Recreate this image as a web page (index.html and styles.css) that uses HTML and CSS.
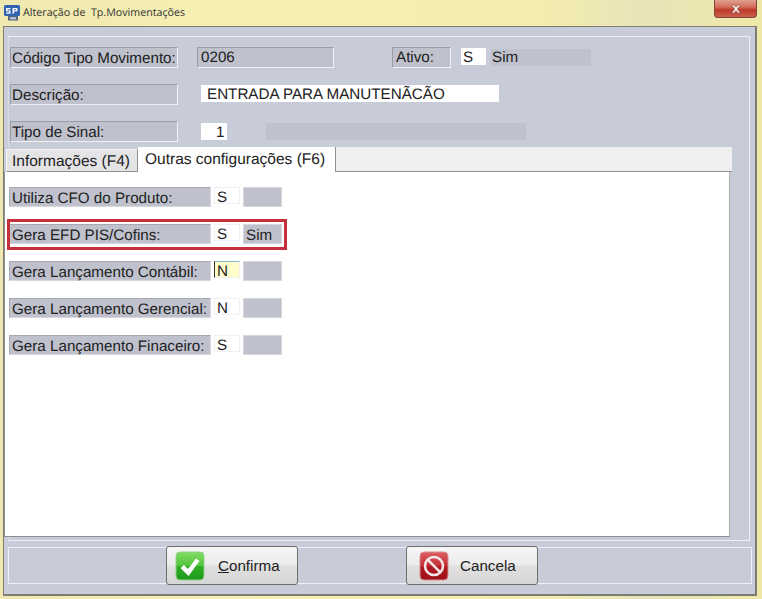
FILE: index.html
```html
<!DOCTYPE html>
<html lang="pt">
<head>
<meta charset="utf-8">
<title>Alteração de Tp.Movimentações</title>
<link rel="stylesheet" href="styles.css">
</head>
<body>
<div class="window">
  <header class="titlebar">
    <svg class="logo" viewBox="0 0 16 16" width="16" height="16"><rect x="0" y="0" width="16" height="11" rx="1.500" fill="#2f62b0"/><path d="M2 3h4.500v1.400H3.500v1h3v3.400H2V7.400h3v-1H2zM8.500 3h5v3.600h-3.400v2.200H8.500zM10.100 4.300v1h1.800v-1z" fill="#f2f4fa"/><rect x="4" y="11" width="10" height="4.500" fill="#55657f"/><rect x="6" y="12.300" width="6" height="2" fill="#c4cedd"/></svg>
    <span class="title">Alteração de&nbsp; Tp.Movimentações</span>
    <div class="close"><svg viewBox="0 0 12 10" width="12" height="10"><path d="M1.500 1h2.600L6 3.200 7.900 1h2.600L7.400 5l3.100 4H7.900L6 6.800 4.100 9H1.500l3.100-4z" fill="#f6efee" stroke="#7c3a30" stroke-width=".5"/></svg></div>
  </header>
  <main class="client">
    <div class="frame">
      <div class="head">
        <div class="line line-1">
          <div class="sunken lbl">Código Tipo Movimento:</div>
          <div class="sunken code">0206</div>
          <div class="sunken ativo">Ativo:</div>
          <div class="input s-in">S</div>
          <div class="flatbox sim">Sim</div>
        </div>
        <div class="line line-2">
          <div class="sunken lbl">Descrição:</div>
          <div class="input desc">ENTRADA PARA MANUTENÃCÃO</div>
        </div>
        <div class="line line-3">
          <div class="sunken lbl">Tipo de Sinal:</div>
          <div class="input sinal">1</div>
          <div class="flatbox sinal-desc"></div>
        </div>
      </div>
      <div class="tabs">
        <div class="tabbar">
          <div class="tab off">Informações (F4)</div>
          <div class="tab on">Outras configurações (F6)</div>
        </div>
        <div class="page">
          <div class="opt"><div class="sunken olbl">Utiliza CFO do Produto:</div><div class="input oin">S</div><div class="sunken oval"></div></div>
          <div class="opt marked"><div class="sunken olbl">Gera EFD PIS/Cofins:</div><div class="input oin">S</div><div class="sunken oval">Sim</div></div>
          <div class="opt"><div class="sunken olbl">Gera Lançamento Contábil:</div><div class="input oin focus">N</div><div class="sunken oval"></div></div>
          <div class="opt"><div class="sunken olbl">Gera Lançamento Gerencial:</div><div class="input oin">N</div><div class="sunken oval"></div></div>
          <div class="opt"><div class="sunken olbl">Gera Lançamento Finaceiro:</div><div class="input oin">S</div><div class="sunken oval"></div></div>
        </div>
      </div>
    </div>
    <footer class="actions">
      <button class="btn btn-ok" type="button">
        <svg class="ico" viewBox="0 0 30 30" width="30" height="30"><defs><linearGradient id="g" x1="0" y1="0" x2="0" y2="1"><stop offset="0" stop-color="#7fdc62"/><stop offset=".48" stop-color="#55c63e"/><stop offset=".52" stop-color="#2fae26"/><stop offset="1" stop-color="#1f9a1c"/></linearGradient></defs><rect x="1" y="1" width="28" height="28" rx="4" fill="url(#g)" stroke="#8fd088"/><path d="M5.500 17l3.500-3 4 4L21 7.500l3.500 2.500L13.500 25z" fill="#fff"/></svg>
        <span class="cap"><u>C</u>onfirma</span>
      </button>
      <button class="btn btn-no" type="button">
        <svg class="ico" viewBox="0 0 30 30" width="30" height="30"><defs><linearGradient id="r" x1="0" y1="0" x2="0" y2="1"><stop offset="0" stop-color="#dc6064"/><stop offset=".48" stop-color="#c43038"/><stop offset=".52" stop-color="#b01a22"/><stop offset="1" stop-color="#9c1018"/></linearGradient></defs><rect x="1" y="1" width="28" height="28" rx="4" fill="url(#r)" stroke="#dd8f8f"/><circle cx="15" cy="15" r="9" fill="none" stroke="#f4e6e6" stroke-width="2.600"/><path d="M8.700 8.700L21.300 21.300" stroke="#f4e6e6" stroke-width="2.600"/></svg>
        <span class="cap">Cancela</span>
      </button>
    </footer>
  </main>
</div>
</body>
</html>
```
FILE: styles.css
```css
*, *::before, *::after { box-sizing: border-box; }
html, body { margin: 0; padding: 0; }
body {
  width: 762px; height: 599px; overflow: hidden;
  font-family: "Liberation Sans", Arial, sans-serif;
  font-size: 15.2px;
  text-rendering: geometricPrecision;
  color: #222;
}
.window {
  width: 762px; height: 599px;
  display: flex; flex-direction: column;
  background: linear-gradient(90deg, #efe8b0 0%, #f6f0b4 30%, #f5eeb0 55%, #f3ecb0 72%, #e8e4b8 85%, #efe9a8 100%);
}
.titlebar {
  height: 26px; flex: none;
  display: flex; align-items: flex-start;
  padding-left: 4px;
}
.logo { margin-top: 5px; }
.title {
  font: 10.7px/14px "Open Sans", sans-serif;
  color: #333; margin: 6px 0 0 3px;
}
.close {
  margin-left: auto; margin-right: 5px;
  width: 43px; height: 18px;
  display: flex; align-items: center; justify-content: center;
  background: linear-gradient(#dfa090 0%, #d4705c 40%, #c0392a 58%, #c8604c 100%);
  border: 1px solid #80453c; border-top: 0;
  border-radius: 0 0 4px 4px;
}
.client {
  width: 754px; height: 570px;
  margin-left: 3px;
  background: #c8cbd8;
  border: 1px solid #7d7d74;
  border-width: 1px 2px 2px 1px;
  padding: 9px 3px 0 0;
}
.frame {
  width: 742px; height: 505px;
  margin-left: 4px;
  border: 1px solid #eef0f6;
  border-left-color: #d8dae4;
  padding-top: 10px;
  display: flex; flex-direction: column;
}
.head { height: 100px; padding-left: 1px; }
.sunken {
  background: #bfc1cc;
  border: 1px solid;
  border-color: #9a9ca6 #f0f1f5 #f0f1f5 #9a9ca6;
  display: flex; align-items: center;
  padding-left: 1px;
  white-space: nowrap;
}
.input {
  background: #fff;
  display: flex; align-items: center;
  white-space: nowrap;
  padding-top: 2px;
}
.flatbox {
  background: #bfc1cc;
  display: flex; align-items: center;
}
.line { display: flex; align-items: flex-start; height: 37px; }
.lbl { width: 168px; height: 21px; padding-top: 1px; }
.code { width: 137px; height: 21px; margin-left: 19px; padding-left: 3px; }
.ativo { width: 59px; height: 21px; margin-left: 58px; padding-left: 3px; }
.s-in { width: 25px; height: 17px; margin: 1px 0 0 10px; padding-left: 2px; }
.sim { width: 100px; height: 17px; margin: 2px 0 0 5px; padding-left: 1px; }
.desc { width: 298px; height: 17px; margin: 1px 0 0 23px; padding-left: 6px; }
.sinal { width: 26px; height: 17px; margin: 2px 0 0 23px; padding-left: 15px; }
.sinal-desc { width: 260px; height: 17px; margin: 2px 0 0 39px; }
.tabs {
  width: 728px; height: 390px;
  margin: 0 0 0 -5px;
  display: flex; flex-direction: column;
}
.tabbar {
  height: 25px; flex: none;
  display: flex; align-items: flex-end;
  background: #c8cbd8;
  padding-left: 2px;
}
.tabbar::after {
  content: ""; flex: 1; height: 25px;
  background: #efefef;
  border-bottom: 1px solid #8f8f8f;
}
.tab { white-space: nowrap; font-size: 15.5px; }
.tab.off {
  width: 132px; height: 23px;
  background: #e4e4e6;
  border: 1px solid #f4f4f4;
  border-right-color: #8f8f8f;
  border-bottom-color: #8f8f8f;
  padding: 3px 0 0 5px;
}
.tab.on {
  width: 198px; height: 25px;
  background: #fff;
  border-right: 1px solid #8f8f8f;
  padding: 4px 0 0 7px;
}
.page {
  flex: 1;
  width: 726px;
  background: #fff;
  border-left: 1px solid #8f8f8f;
  border-right: 1px solid #b0b0b0;
  border-bottom: 1px solid #8f8f8f;
  padding: 15px 0 0 4px;
}
.opt { display: flex; align-items: flex-start; height: 37px; gap: 3px; }
.olbl { width: 202px; height: 20px; padding: 3px 0 0 2px; border-color: #a8a8ae #d8d8dc #d8d8dc #a8a8ae; }
.oin { width: 26px; height: 17px; padding: 3px 0 0 2px; border: 1px solid #f0f0f2; }
.oval { width: 39px; height: 20px; padding: 3px 0 0 2px; border-color: #d8d8dc; }
.focus { background: #ffffcc; border-color: #8fb0d0 #f0f0f2 #f0f0f2 #333; }
.marked { position: relative; }
.marked::after {
  content: ""; position: absolute;
  left: -2px; top: -5px; width: 280px; height: 31px;
  border: 3px solid #c4303c;
  pointer-events: none;
}
.actions {
  width: 744px; height: 37px;
  margin: 6px 0 0 4px;
  border: 1px solid #eef0f6;
  display: flex; align-items: center;
  padding-left: 157px; gap: 108px;
}
.btn {
  width: 132px; height: 39px;
  flex: none;
  background: linear-gradient(#f6f6f6 0%, #ececec 48%, #e0e0e0 52%, #d6d6d6 100%);
  border: 1px solid #6e6e6e;
  border-radius: 3px;
  display: flex; align-items: center;
  font-family: "Liberation Sans", Arial, sans-serif;
  font-size: 15.2px; color: #222;
}
.btn-ok { padding: 0 0 0 8px; }
.btn-no { padding: 0 0 0 12px; }
.btn-ok .cap { margin-left: 13px; }
.btn-no .cap { margin-left: 11px; }
```
